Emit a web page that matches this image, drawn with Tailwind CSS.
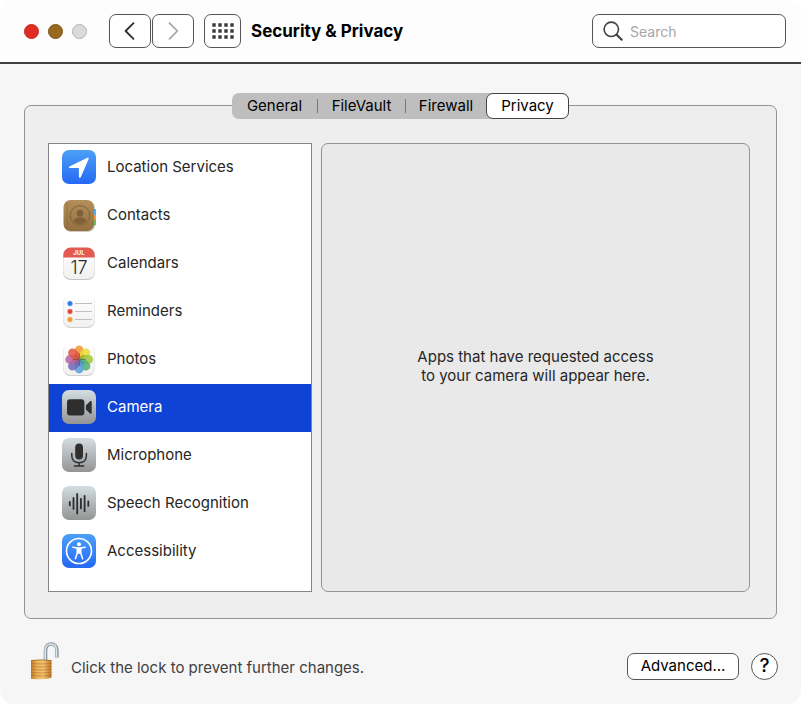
<!DOCTYPE html>
<html lang="en">
<head>
  <meta charset="UTF-8" />
  <meta name="viewport" content="width=device-width, initial-scale=1.0"/>
  <title>Security &amp; Privacy</title>
  <script src="https://cdn.jsdelivr.net/npm/@tailwindcss/browser@4"></script>
</head>
<body class="bg-white font-['Inter',sans-serif] text-[15px] text-[#262626]">
  <div class="min-h-screen flex flex-col bg-[#f6f6f6] rounded-[14px] overflow-hidden">

    <!-- Toolbar -->
    <header class="flex items-center h-16 pl-6 pr-[15px] bg-[#fdfdfd] border-b-2 border-[#404040]">
      <div class="flex gap-[9px]">
        <button aria-label="Close" class="size-[15px] rounded-full bg-[#dd2d22] border border-[#c9261c]"></button>
        <button aria-label="Minimize" class="size-[15px] rounded-full bg-[#976a20] border border-[#7d5516]"></button>
        <button aria-label="Zoom" disabled class="size-[15px] rounded-full bg-[#dadada] border border-[#b4b4b4]"></button>
      </div>
      <div class="flex gap-px ml-[22px]">
        <button aria-label="Back" class="flex items-center justify-center w-[42px] h-[34px] rounded-[7px] bg-white border border-[#555]">
          <svg class="w-3 h-[18px]" viewBox="0 0 12 18" fill="none" stroke="#2e2e2e" stroke-width="1.8" stroke-linecap="round" stroke-linejoin="round"><path d="M9.5 1.2 1.6 9l7.9 7.8"/></svg>
        </button>
        <button aria-label="Forward" disabled class="flex items-center justify-center w-[42px] h-[34px] rounded-[7px] bg-white border border-[#555]">
          <svg class="w-3 h-[18px]" viewBox="0 0 12 18" fill="none" stroke="#a3a3a3" stroke-width="1.7" stroke-linecap="round" stroke-linejoin="round"><path d="M2.5 1.2 10.4 9l-7.9 7.8"/></svg>
        </button>
      </div>
      <button aria-label="Show All" class="flex items-center justify-center w-[37px] h-[34px] ml-[10px] rounded-[7px] bg-white border border-[#555]">
        <svg class="w-[22px] h-4" viewBox="0 0 22 16" fill="none" stroke="#3a3a3a" stroke-width="3.4" stroke-dasharray="3.4 2.6"><path d="M.3 2h22M.3 8h22M.3 14h22"/></svg>
      </button>
      <h1 class="ml-[10px] text-[17px] leading-6 font-bold text-black whitespace-nowrap">Security &amp; Privacy</h1>
      <label class="flex items-center gap-[7px] w-[194px] h-[34px] ml-auto pl-[10px] pr-2 rounded-[7px] bg-white border border-[#555]">
        <svg class="size-5 shrink-0" viewBox="0 0 20 20" fill="none" stroke="#404040" stroke-linecap="round"><circle cx="8.3" cy="8.3" r="7.2" stroke-width="1.6"/><path d="m13.7 13.7 5 5" stroke-width="2.1"/></svg>
        <input type="search" aria-label="Search" placeholder="Search" class="w-full min-w-0 text-[14px] outline-none placeholder:text-[#a6a6a6]" />
      </label>
    </header>

    <main class="flex-1 flex flex-col px-6 pt-[29px]">
      <nav class="relative z-10 flex self-center h-[26px] rounded-[7px] bg-[#bebebe] text-black">
        <button class="w-[85px]">General</button>
        <span class="self-center w-px h-[14px] bg-[#777]"></span>
        <button class="w-[87px]">FileVault</button>
        <span class="self-center w-px h-[14px] bg-[#777]"></span>
        <button class="w-20">Firewall</button>
        <button aria-current="page" class="w-[83px] rounded-[7px] bg-white border border-[#444]">Privacy</button>
      </nav>

      <section class="flex-1 flex gap-[9px] -mt-[14px] pt-[37px] pl-[23px] pr-[26px] pb-[26px] rounded-[7px] bg-[#eee] border border-[#939393]">
        <ul class="w-[264px] shrink-0 bg-white border border-[#858585]">
          <li><button class="flex items-center gap-[11px] w-full h-12 pl-[13px] pb-0.5 text-left">
            <svg class="size-[34px]" viewBox="0 0 34 34">
              <defs><linearGradient id="blue" x2="0" y2="1"><stop stop-color="#4ba0f8"/><stop offset="1" stop-color="#2569f5"/></linearGradient></defs>
              <rect width="34" height="34" rx="7" fill="url(#blue)"/>
              <path d="M7.4 16.6 25.4 7.8c1-.4 1.7.3 1.2 1.3l-7.7 18c-.5 1.1-2 .9-2-.3v-8.2q0-.6-.6-.6H7.700c-1.100 0-1.200-1-.300-1.400z" fill="#fff"/>
            </svg>
            <span>Location Services</span>
          </button></li>
          <li><button class="flex items-center gap-[11px] w-full h-12 pl-[13px] pb-0.5 text-left">
            <svg class="size-[34px]" viewBox="0 0 34 34">
              <defs><linearGradient id="leather" x2="0" y2="1"><stop stop-color="#b38e5a"/><stop offset="1" stop-color="#94703f"/></linearGradient></defs>
              <rect x="2" y="3" width="31" height="31" rx="7" fill="#cfccc6"/>
              <path d="M31 11h3v6h-3z" fill="#58aee8"/><path d="M31 17h3v5h-3z" fill="#ef9a3c"/><path d="M31 22h3v5l-3 1z" fill="#66bd55"/>
              <rect x="1.5" y="2" width="30.5" height="31" rx="7" fill="url(#leather)"/>
              <path d="M5 4v27" stroke="#84643a" stroke-width=".7" opacity=".7"/>
              <circle cx="18" cy="17.5" r="9.800" fill="none" stroke="#80603a"/>
              <circle cx="18" cy="15.2" r="3.4" fill="#80603a"/>
              <path d="M11.2 22.9c2-3 4-3.7 6.800-3.700s4.800.7 6.800 3.700c-3.800 4-9.800 4-13.600 0z" fill="#80603a"/>
            </svg>
            <span>Contacts</span>
          </button></li>
          <li><button class="flex items-center gap-[11px] w-full h-12 pl-[13px] pb-0.5 text-left">
            <svg class="size-[34px]" viewBox="0 0 34 34">
              <defs><linearGradient id="paper" x2="0" y2="1"><stop stop-color="#fff"/><stop offset="1" stop-color="#f0f0ef"/></linearGradient></defs>
              <rect x="1" y="2" width="32" height="32" rx="7.5" fill="#c4c4c4"/>
              <rect x="1.3" y="1.5" width="31.4" height="31.5" rx="7.3" fill="url(#paper)"/>
              <path d="M1.3 11.5V8.800a7.300 7.300 0 0 1 7.300-7.300h16.800a7.300 7.300 0 0 1 7.300 7.300v2.700z" fill="#e25a50"/>
              <text x="17" y="8.6" text-anchor="middle" font-size="6" font-weight="700" fill="#fff">JUL</text>
              <text x="17" y="27.5" text-anchor="middle" font-size="18" font-weight="300" fill="#2a2a2a">17</text>
            </svg>
            <span>Calendars</span>
          </button></li>
          <li><button class="flex items-center gap-[11px] w-full h-12 pl-[13px] pb-0.5 text-left">
            <svg class="size-[34px]" viewBox="0 0 34 34">
              <rect x="1" y="2" width="32" height="32" rx="7.5" fill="#cfcfcf"/>
              <rect x="1.3" y="1.3" width="31.4" height="31.7" rx="7.3" fill="url(#paper)"/>
              <path d="M13 9.500h17M13 17.500h17M13 25.500h17" stroke="#c0c0c0"/>
              <g stroke-width="1.3" stroke-opacity=".45">
                <circle cx="8" cy="9.5" r="2.2" fill="#2f7bea" stroke="#2f7bea"/>
                <circle cx="8" cy="17.5" r="2.2" fill="#e2453c" stroke="#e2453c"/>
                <circle cx="8" cy="25.5" r="2.2" fill="#ee9a35" stroke="#ee9a35"/>
              </g>
            </svg>
            <span>Reminders</span>
          </button></li>
          <li><button class="flex items-center gap-[11px] w-full h-12 pl-[13px] pb-0.5 text-left">
            <svg class="size-[34px]" viewBox="0 0 34 34">
              <rect x="1" y="2" width="32" height="32" rx="7.5" fill="#cfcfcf"/>
              <rect x="1.3" y="1.3" width="31.4" height="31.7" rx="7.3" fill="url(#paper)"/>
              <g fill-opacity=".85">
                <rect x="12.8" y="3.6" width="8.8" height="13.6" rx="4.4" fill="#f3952b"/>
                <rect x="12.8" y="3.6" width="8.8" height="13.6" rx="4.4" fill="#e9dc35" transform="rotate(45 17.2 17.5)"/>
                <rect x="12.8" y="3.6" width="8.8" height="13.6" rx="4.4" fill="#a0c63c" transform="rotate(90 17.2 17.5)"/>
                <rect x="12.8" y="3.6" width="8.8" height="13.6" rx="4.4" fill="#4fae74" transform="rotate(135 17.2 17.5)"/>
                <rect x="12.8" y="3.6" width="8.8" height="13.6" rx="4.4" fill="#559fd8" transform="rotate(180 17.2 17.5)"/>
                <rect x="12.8" y="3.6" width="8.8" height="13.6" rx="4.4" fill="#6b69b5" transform="rotate(225 17.2 17.5)"/>
                <rect x="12.8" y="3.6" width="8.8" height="13.6" rx="4.4" fill="#b762a4" transform="rotate(270 17.2 17.5)"/>
                <rect x="12.8" y="3.6" width="8.8" height="13.6" rx="4.4" fill="#e2543f" transform="rotate(315 17.2 17.5)"/>
              </g>
              <path d="m12.7 13 9 9m0-9-9 9M17.200 11v13M10.700 17.500h13" stroke="#4b3a2c" stroke-width=".8" opacity=".5"/>
            </svg>
            <span>Photos</span>
          </button></li>
          <li><button aria-current="true" class="flex items-center gap-[11px] w-full h-12 pl-[13px] pb-0.5 text-left bg-[#0f43d5] text-white">
            <svg class="size-[34px]" viewBox="0 0 34 34">
              <defs><linearGradient id="metal" x2="0" y2="1"><stop stop-color="#d3dde3"/><stop offset="1" stop-color="#949494"/></linearGradient></defs>
              <rect width="34" height="34" rx="7" fill="url(#metal)"/>
              <rect x="5" y="9.3" width="17.4" height="16.2" rx="3" fill="#2e2e2e"/>
              <path d="m23.9 15.4 4.100-4.100c.7-.7 1.700-.3 1.700.7v10.800c0 1-1 1.400-1.700.7l-4.100-4.100z" fill="#2e2e2e"/>
            </svg>
            <span>Camera</span>
          </button></li>
          <li><button class="flex items-center gap-[11px] w-full h-12 pl-[13px] pb-0.5 text-left">
            <svg class="size-[34px]" viewBox="0 0 34 34">
              <rect width="34" height="34" rx="7" fill="url(#metal)"/>
              <rect x="13.2" y="5.5" width="7.8" height="16" rx="3.9" fill="#2e2e2e"/>
              <path d="M9.800 15.500v2.200c0 4.400 3 7 7.300 7s7.300-2.600 7.300-7v-2.200M17.100 24.700v3M12.400 27.900h9.400" fill="none" stroke="#2e2e2e" stroke-width="1.5" stroke-linecap="round"/>
            </svg>
            <span>Microphone</span>
          </button></li>
          <li><button class="flex items-center gap-[11px] w-full h-12 pl-[13px] pb-0.5 text-left">
            <svg class="size-[34px]" viewBox="0 0 34 34">
              <rect width="34" height="34" rx="7" fill="url(#metal)"/>
              <path d="M7.800 15.800v3.600M11.500 12v11M15.200 7.800v19.700M18.900 12.800v9.600M22.600 9.800v15.500M26.300 15.300v4.600" stroke="#2e2e2e" stroke-width="1.8" stroke-linecap="round"/>
            </svg>
            <span>Speech Recognition</span>
          </button></li>
          <li><button class="flex items-center gap-[11px] w-full h-12 pl-[13px] pb-0.5 text-left">
            <svg class="size-[34px]" viewBox="0 0 34 34">
              <rect width="34" height="34" rx="7" fill="url(#blue)"/>
              <circle cx="17" cy="17" r="12.5" fill="none" stroke="#fff" stroke-width="1.6"/>
              <circle cx="17" cy="10.2" r="2" fill="#fff"/>
              <path d="M10.800 13.200 15.400 14v4.500l-2 6.300M23.200 13.200 18.600 14v4.500l2 6.300" fill="none" stroke="#fff" stroke-width="1.5" stroke-linecap="round" stroke-linejoin="round"/>
              <path d="M14.700 13.300h4.600v5.300l-1 1.200h-2.600l-1-1.200z" fill="#fff"/>
            </svg>
            <span>Accessibility</span>
          </button></li>
        </ul>
        <div class="flex-1 flex items-center justify-center pb-1 rounded-[7px] bg-[#e9e9e9] border border-[#939393]">
          <p class="text-center leading-[19px]">Apps that have requested access<br>to your camera will appear here.</p>
        </div>
      </section>
    </main>

    <footer class="flex items-end h-[85px] pl-[30px] pr-[23px] pb-6">
      <button class="flex items-end gap-3 leading-6 text-[#404040]">
        <svg class="w-[29px] h-[38px]" viewBox="0 0 29 38" fill="none">
          <defs>
            <linearGradient id="brass"><stop stop-color="#bd7a26"/><stop offset=".3" stop-color="#edb65c"/><stop offset=".6" stop-color="#f3c474"/><stop offset="1" stop-color="#b97421"/></linearGradient>
          </defs>
          <path d="M15.500 18.500V8.500C15.500 4.500 18 2 21.200 2s5.700 2.500 5.700 6.500v7" stroke="#87959c" stroke-width="3.6"/>
          <path d="M15.200 18.500V8.500c0-4 2.500-6.300 5.800-6.300s5.500 2.300 5.500 6.300v6.800" stroke="#dbe4e8" stroke-width="1.7"/>
          <path d="M1 18.300q10-1.300 20.500 0v17.500q-9 2.500-20.500 1z" fill="url(#brass)"/>
          <path d="M1 21.500q10 1 20.500 0M1 24.500q10 1 20.500 0M1 27.500q10 1 20.500 0M1 30.500q10 1 20.500 0M1 33.500q10 1 20.500 0" stroke="#a9651b" stroke-width=".8" opacity=".65"/>
          <path d="M1 18.500q10-1.200 20.500 0" stroke="#9c6b2c" stroke-width=".8"/>
        </svg>
        <span>Click the lock to prevent further changes.</span>
      </button>
      <button class="w-28 h-[27px] ml-auto rounded-[7px] bg-white border border-[#555] text-black">Advanced...</button>
      <button aria-label="Help" class="flex items-center justify-center size-[27px] ml-3 rounded-full bg-white border border-[#555] text-[19px] font-medium text-black">?</button>
    </footer>
  </div>
</body>
</html>
